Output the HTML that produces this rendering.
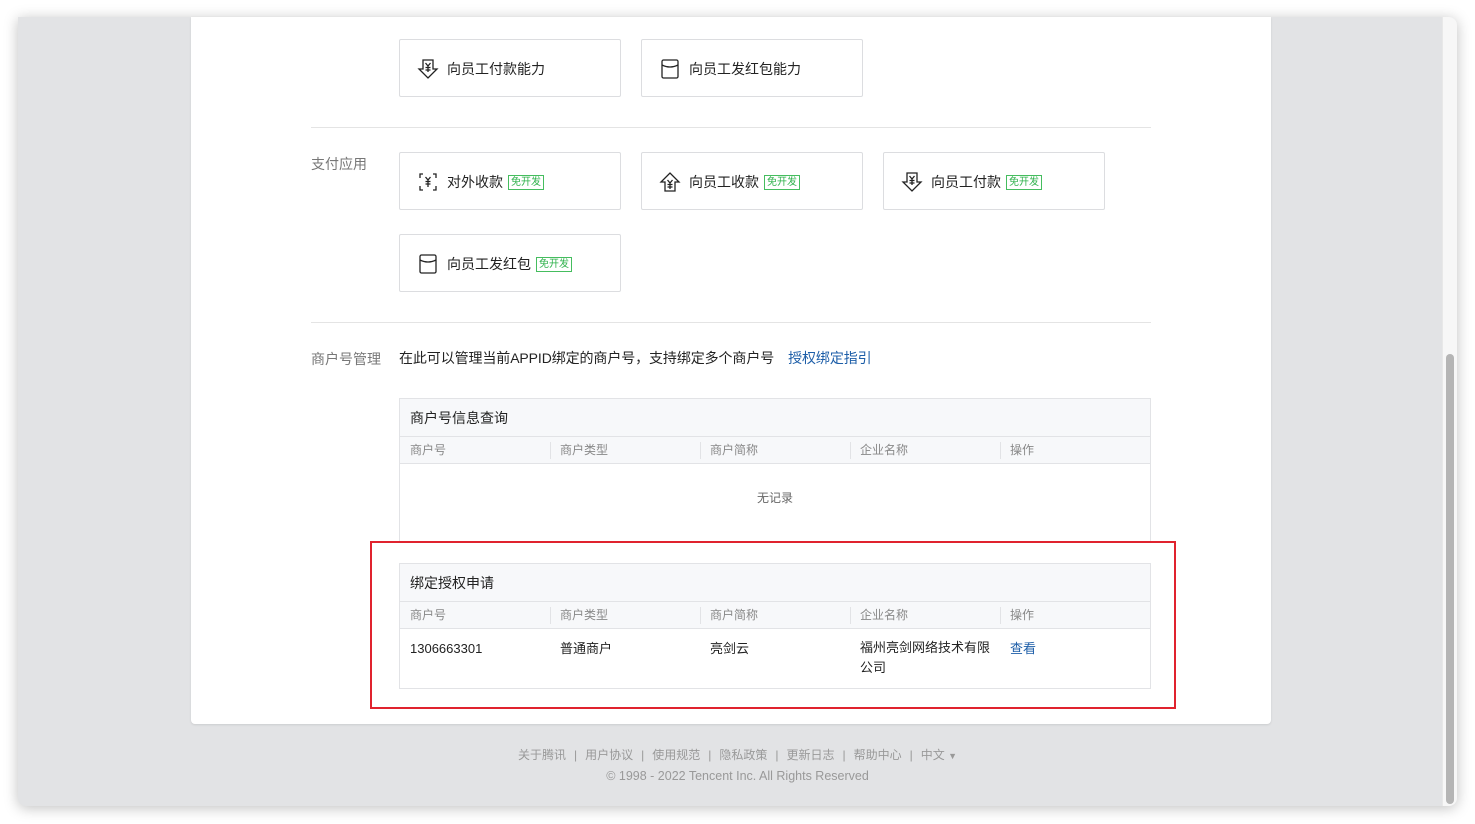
<!DOCTYPE html>
<html><head><meta charset="utf-8"><style>
*{margin:0;padding:0;box-sizing:border-box}
body{width:1475px;height:824px;background:#fff;font-family:"Liberation Sans","Noto Sans CJK SC",sans-serif;position:relative;overflow:hidden;color:#353535}
.win{position:absolute;left:18px;top:17px;width:1439px;height:789px;background:#e2e3e5;border-radius:0 8px 8px 8px;box-shadow:0 2px 14px rgba(0,0,0,.25);overflow:hidden}
.track{position:absolute;right:0;top:0;width:15px;height:100%;background:#f7f7f7;border-left:1px solid #e8e8e8}
.thumb{position:absolute;right:3px;top:337px;width:8px;height:450px;background:#b5b5b5;border-radius:4px}
.a{position:absolute}
.box{position:absolute;width:222px;height:58px;border:1px solid #dcdde0;border-radius:2px;font-size:14px;color:#222}
.box svg{position:absolute;left:17px;top:18px}
.box span.t{position:absolute;left:47px;top:19px;white-space:nowrap}
.tag{display:inline-block;font-size:10px;color:#2db14a;border:1px solid #45bd5e;line-height:13px;padding:0 2px;margin-left:5px;vertical-align:2px}
.hr{position:absolute;left:311px;width:840px;height:1px;background:#e4e4e4}
.lbl{position:absolute;font-size:14px;color:#777}
.tbl{position:absolute;left:399px;width:752px;border:1px solid #e2e3e6;font-size:12px}
.tt{height:38px;background:#f7f8fa;border-bottom:1px solid #e2e3e6;font-size:14px;color:#222;padding:10px 10px;line-height:18px}
.th{height:27px;background:#f7f8fa;border-bottom:1px solid #e2e3e6;position:relative;color:#888}
.th span{position:absolute;top:5px;line-height:16px}
.tr span{position:absolute;top:11px;line-height:18px}
.th i{position:absolute;top:5px;width:1px;height:17px;background:#e2e3e6}
.tr{position:relative;font-size:13px;color:#222}
.foot{position:absolute;left:0;width:1475px;text-align:center;font-size:12px;color:#999;line-height:16px}
.foot b{font-weight:normal;margin:0 8px}
</style></head><body>
<div class="win"><div class="track"><div class="thumb"></div></div></div>
<div class="a" style="left:191px;top:17px;width:1080px;height:707px;background:#fff;border-radius:0 0 4px 4px;box-shadow:0 1px 2px rgba(0,0,0,.1)"></div>

<div class="box" style="left:399px;top:39px"><svg width="22" height="22" viewBox="0 0 22 22" fill="none" stroke="#222" stroke-width="1.3"><path d="M6 2h10v9h4l-9 9-9-9h4z"/><path d="M8.5 5l2.5 3 2.5-3M11 8v6M8.5 9.5h5M8.5 12h5"/></svg><span class="t">向员工付款能力</span></div>
<div class="box" style="left:641px;top:39px"><svg width="22" height="22" viewBox="0 0 22 22" fill="none" stroke="#222" stroke-width="1.3"><rect x="3" y="2" width="16" height="18" rx="1.5"/><path d="M3 7q8 4 16 0"/></svg><span class="t">向员工发红包能力</span></div>

<div class="hr" style="top:127px"></div>
<div class="lbl" style="left:311px;top:154px">支付应用</div>

<div class="box" style="left:399px;top:152px"><svg width="22" height="22" viewBox="0 0 22 22" fill="none" stroke="#222" stroke-width="1.3"><path d="M6 3H3v4M16 3h3v4M6 19H3v-4M16 19h3v-4"/><path d="M8.5 6l2.5 3 2.5-3M11 9v7M8.5 10.5h5M8.5 13h5"/></svg><span class="t">对外收款<span class="tag">免开发</span></span></div>
<div class="box" style="left:641px;top:152px"><svg width="22" height="22" viewBox="0 0 22 22" fill="none" stroke="#222" stroke-width="1.3"><path d="M6 20v-9H2l9-9 9 9h-4v9z"/><path d="M8.5 9l2.5 3 2.5-3M11 12v6M8.5 13.5h5M8.5 16h5"/></svg><span class="t">向员工收款<span class="tag">免开发</span></span></div>
<div class="box" style="left:883px;top:152px"><svg width="22" height="22" viewBox="0 0 22 22" fill="none" stroke="#222" stroke-width="1.3"><path d="M6 2h10v9h4l-9 9-9-9h4z"/><path d="M8.5 5l2.5 3 2.5-3M11 8v6M8.5 9.5h5M8.5 12h5"/></svg><span class="t">向员工付款<span class="tag">免开发</span></span></div>
<div class="box" style="left:399px;top:234px"><svg width="22" height="22" viewBox="0 0 22 22" fill="none" stroke="#222" stroke-width="1.3"><rect x="3" y="2" width="16" height="18" rx="1.5"/><path d="M3 7q8 4 16 0"/></svg><span class="t">向员工发红包<span class="tag">免开发</span></span></div>

<div class="hr" style="top:322px"></div>
<div class="lbl" style="left:311px;top:349px">商户号管理</div>
<div class="a" style="left:399px;top:348px;font-size:14px;color:#222;white-space:nowrap;letter-spacing:-0.1px">在此可以管理当前APPID绑定的商户号，支持绑定多个商户号<span style="color:#1d5ea8;margin-left:14px">授权绑定指引</span></div>

<div class="tbl" style="top:398px;height:160px">
<div class="tt">商户号信息查询</div>
<div class="th"><span style="left:10px">商户号</span><i style="left:150px"></i><span style="left:160px">商户类型</span><i style="left:300px"></i><span style="left:310px">商户简称</span><i style="left:450px"></i><span style="left:460px">企业名称</span><i style="left:600px"></i><span style="left:610px">操作</span></div>
<div style="text-align:center;color:#666;padding-top:25px">无记录</div>
</div>

<div class="a" style="left:370px;top:541px;width:806px;height:168px;border:2px solid #e0232e;background:#fff"></div>
<div class="tbl" style="top:563px;height:126px">
<div class="tt">绑定授权申请</div>
<div class="th"><span style="left:10px">商户号</span><i style="left:150px"></i><span style="left:160px">商户类型</span><i style="left:300px"></i><span style="left:310px">商户简称</span><i style="left:450px"></i><span style="left:460px">企业名称</span><i style="left:600px"></i><span style="left:610px">操作</span></div>
<div class="tr"><span style="left:10px">1306663301</span><span style="left:160px">普通商户</span><span style="left:310px">亮剑云</span><span style="left:460px;width:135px;line-height:20px;top:9px">福州亮剑网络技术有限公司</span><span style="left:610px;color:#1d5ea8">查看</span></div>
</div>

<div class="foot" style="top:747px">关于腾讯<b>|</b>用户协议<b>|</b>使用规范<b>|</b>隐私政策<b>|</b>更新日志<b>|</b>帮助中心<b>|</b>中文 <span style="font-size:9px">▼</span></div>
<div class="foot" style="top:768px;font-size:12.5px">© 1998 - 2022 Tencent Inc. All Rights Reserved</div>
</body></html>
